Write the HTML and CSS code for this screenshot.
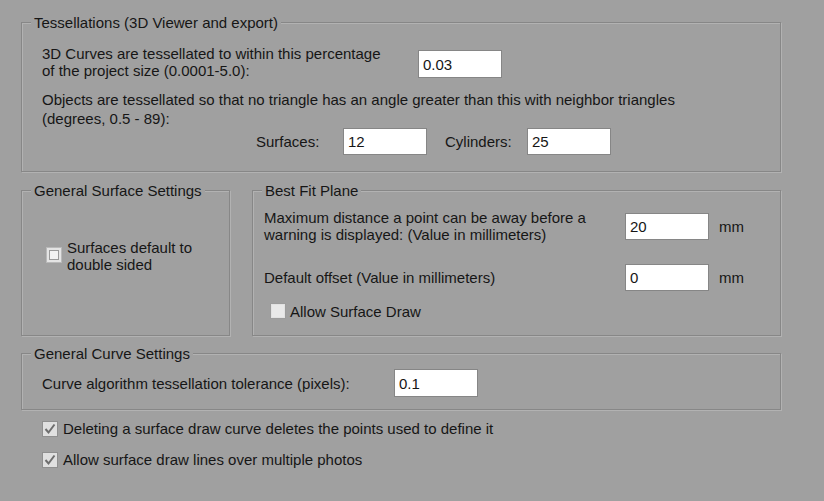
FILE: index.html
```html
<!DOCTYPE html>
<html lang="en">
<head>
<meta charset="utf-8">
<title>Options</title>
<link rel="stylesheet" href="styles.css">
</head>
<body>
<div class="page">
  <section class="group group-tess">
    <div class="group-title">Tessellations (3D Viewer and export)</div>
    <div class="group-body">
      <div class="row row-curves">
        <div class="label label-curves">3D Curves are tessellated to within this percentage<br>of the project size (0.0001-5.0):</div>
        <input class="field field-curves" type="text" value="0.03" readonly>
      </div>
      <div class="para-objects">Objects are tessellated so that no triangle has an angle greater than this with neighbor triangles<br>(degrees, 0.5 - 89):</div>
      <div class="row row-angles">
        <span class="lbl-surfaces">Surfaces:</span>
        <input class="field" type="text" value="12" readonly>
        <span class="lbl-cyl">Cylinders:</span>
        <input class="field" type="text" value="25" readonly>
      </div>
    </div>
  </section>

  <div class="mid">
    <section class="group group-surface">
      <div class="group-title">General Surface Settings</div>
      <div class="group-body">
        <div class="check-row check-double">
          <span class="cb cb-off"><svg viewBox="0 0 16 16" width="16" height="16"><rect x="0.5" y="0.5" width="15" height="15" fill="#e4e4e4" stroke="#b9b9b9"/><rect x="3.5" y="3.5" width="9" height="9" fill="#f2f2f2" stroke="#9a9a9a"/></svg></span>
          <span class="cb-label">Surfaces default to<br>double sided</span>
        </div>
      </div>
    </section>

    <section class="group group-bfp">
      <div class="group-title">Best Fit Plane</div>
      <div class="group-body">
        <div class="row row-maxdist">
          <div class="label label-bfp">Maximum distance a point can be away before a<br>warning is displayed: (Value in millimeters)</div>
          <input class="field" type="text" value="20" readonly>
          <span class="unit">mm</span>
        </div>
        <div class="row row-offset">
          <div class="label label-bfp">Default offset (Value in millimeters)</div>
          <input class="field" type="text" value="0" readonly>
          <span class="unit">mm</span>
        </div>
        <div class="check-row check-surfdraw">
          <span class="cb"><svg viewBox="0 0 16 16" width="16" height="16"><rect x="0.5" y="0.5" width="15" height="15" fill="#e2e2e2" stroke="#9c9c9c"/><rect x="2" y="2" width="12" height="12" fill="#e9e9e9"/></svg></span>
          <span class="cb-label">Allow Surface Draw</span>
        </div>
      </div>
    </section>
  </div>

  <section class="group group-curve">
    <div class="group-title">General Curve Settings</div>
    <div class="group-body">
      <div class="row row-tol">
        <div class="label label-tol">Curve algorithm tessellation tolerance (pixels):</div>
        <input class="field field-tol" type="text" value="0.1" readonly>
      </div>
    </div>
  </section>

  <div class="check-row check-delete">
    <span class="cb"><svg viewBox="0 0 16 16" width="16" height="16"><rect x="0.5" y="0.5" width="15" height="15" fill="#e0e0e0" stroke="#8f8f8f"/><path d="M3.5 8 L6.5 11.5 L12.5 3.5" fill="none" stroke="#6e6e6e" stroke-width="2"/></svg></span>
    <span class="cb-label">Deleting a surface draw curve deletes the points used to define it</span>
  </div>
  <div class="check-row check-multi">
    <span class="cb"><svg viewBox="0 0 16 16" width="16" height="16"><rect x="0.5" y="0.5" width="15" height="15" fill="#e0e0e0" stroke="#8f8f8f"/><path d="M3.5 8 L6.5 11.5 L12.5 3.5" fill="none" stroke="#6e6e6e" stroke-width="2"/></svg></span>
    <span class="cb-label">Allow surface draw lines over multiple photos</span>
  </div>
</div>
</body>
</html>
```

FILE: styles.css
```css
html, body {
  margin: 0;
  padding: 0;
  background: #a0a0a0;
}
body {
  font-family: "Liberation Sans", Arial, sans-serif;
  font-size: 15px;
  line-height: 17px;
  color: #161616;
}
.page {
  width: 760px;
  padding: 22px 0 0 21px;
}
.group {
  border: 1px solid #878787;
  box-shadow: 1px 1px 0 #b2b2b2, inset 1px 1px 0 #b2b2b2;
  box-sizing: border-box;
}
.group-title {
  width: fit-content;
  margin: -9px 0 0 9px;
  padding: 0 3px;
  background: #a0a0a0;
  white-space: nowrap;
}
.row {
  display: flex;
  align-items: center;
}
.label {
  white-space: nowrap;
}
.field {
  box-sizing: border-box;
  width: 84px;
  height: 27px;
  margin: 0;
  padding: 0 0 0 4px;
  border: 1px solid #868686;
  background: #ffffff;
  font: inherit;
  color: #161616;
  outline: none;
}

/* Tessellations */
.group-tess .group-body {
  padding: 0 0 16px 20px;
}
.row-curves {
  margin-top: 14px;
  align-items: flex-start;
}
.label-curves {
  width: 376px;
}
.field-curves {
  margin-top: 5px;
  height: 28px;
}
.para-objects {
  margin-top: 11px;
  line-height: 19px;
  white-space: nowrap;
}
.lbl-surfaces {
  margin-left: 214px;
  width: 87px;
}
.lbl-cyl {
  margin-left: 18px;
  width: 82px;
}

/* Middle row */
.mid {
  display: flex;
  gap: 22px;
  margin-top: 18px;
}
.group-surface {
  width: 209px;
}
.group-surface .group-body {
  padding: 0 0 0 24px;
}
.group-bfp {
  width: 529px;
}
.group-bfp .group-body {
  padding: 0 0 15px 11px;
}
.check-row {
  display: flex;
  align-items: flex-start;
}
.cb {
  display: block;
  width: 16px;
  height: 16px;
  flex: none;
}
.cb svg {
  display: block;
}
.cb-label {
  white-space: nowrap;
}
.check-double {
  margin-top: 40px;
}
.check-double .cb {
  margin-top: 8px;
}
.check-double .cb-label {
  margin-left: 5px;
}
.row-maxdist {
  margin-top: 10px;
}
.label-bfp {
  width: 361px;
}
.unit {
  margin-left: 10px;
}
.row-offset {
  margin-top: 21px;
}
.check-surfdraw {
  margin-top: 12px;
  margin-left: 6px;
}
.check-surfdraw .cb-label {
  margin-left: 4px;
}

/* Curve group */
.group-curve {
  margin-top: 17px;
}
.group-curve .group-body {
  padding: 0 0 12px 20px;
}
.row-tol {
  margin-top: 7px;
}
.label-tol {
  width: 352px;
}
.field-tol {
  height: 28px;
}

/* Bottom checkboxes */
.check-delete {
  margin: 11px 0 0 21px;
}
.check-multi {
  margin: 15px 0 0 21px;
}
.check-delete .cb-label,
.check-multi .cb-label {
  margin-left: 5px;
  margin-top: -1px;
}
```
